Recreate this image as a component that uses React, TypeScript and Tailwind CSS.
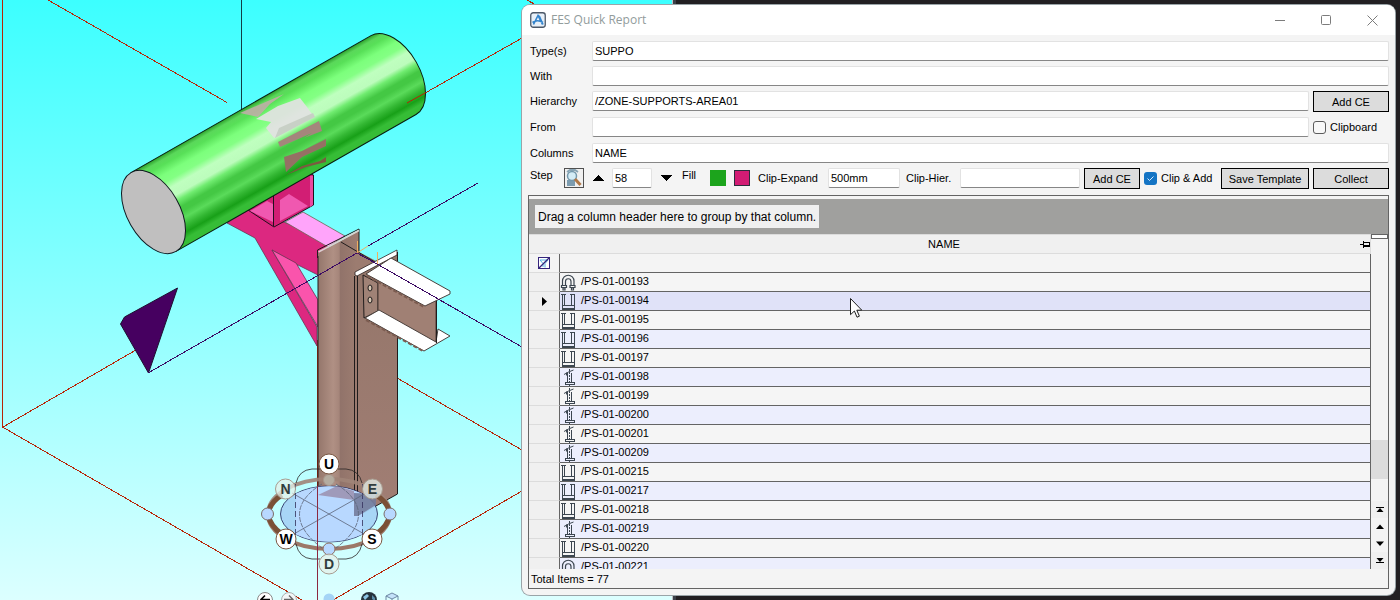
import React from "react";

type Kind = "bolt" | "clamp" | "stand";

const rows: { name: string; kind: Kind }[] = [
  { name: "/PS-01-00193", kind: "bolt" },
  { name: "/PS-01-00194", kind: "clamp" },
  { name: "/PS-01-00195", kind: "clamp" },
  { name: "/PS-01-00196", kind: "clamp" },
  { name: "/PS-01-00197", kind: "clamp" },
  { name: "/PS-01-00198", kind: "stand" },
  { name: "/PS-01-00199", kind: "stand" },
  { name: "/PS-01-00200", kind: "stand" },
  { name: "/PS-01-00201", kind: "stand" },
  { name: "/PS-01-00209", kind: "stand" },
  { name: "/PS-01-00215", kind: "clamp" },
  { name: "/PS-01-00217", kind: "clamp" },
  { name: "/PS-01-00218", kind: "clamp" },
  { name: "/PS-01-00219", kind: "stand" },
  { name: "/PS-01-00220", kind: "clamp" },
  { name: "/PS-01-00221", kind: "bolt" },
];

function KindIcon({ kind }: { kind: Kind }) {
  return (
    <svg width="16" height="17" viewBox="0 0 16 17" fill="none" stroke="#3c4650" shapeRendering="crispEdges" className="block">
      {kind === "clamp" && (
        <path d="M1 1.500h5M10 1.500h5M2.500 2v14h12V2M4.500 2v10.500h7V2M3 12.500h11M3 15.500h12" />
      )}
      {kind === "bolt" && (
        <g shapeRendering="auto" strokeWidth="1.200">
          <path d="M2.500 12V7a5.500 5.500 0 0 1 11.500 0v5M5.500 12V7.500a2.500 2.500 0 0 1 5.500 0V12" />
          <path d="M1.500 11.500h5v2h-5zM10 11.500h5v2h-5zM3 14h2v2H3zM11.500 14h2v2h-2z" />
        </g>
      )}
      {kind === "stand" && (
        <>
          <path d="M7.500 3.500v10M11.500 3.500v10M5 13.500h9v2H5z" />
          <path d="M9.500 0v13" strokeDasharray="2 1" />
          <path d="M4 5.500l4.500-2.500 5-2M6.500 3.500v3M9.500 16v1" shapeRendering="auto" />
        </>
      )}
    </svg>
  );
}

function CompassNode({ x, y, t, faded }: { x: number; y: number; t: string; faded?: boolean }) {
  return (
    <g>
      <circle cx={x} cy={y} r="10" fill={faded ? "#e4f0ea" : "#ffffff"} fillOpacity={faded ? 0.75 : 1} stroke={faded ? "#a89c90" : "#7a5844"} />
      <text x={x} y={y + 5} textAnchor="middle" fontFamily="'Liberation Sans', Arial, sans-serif" fontWeight="700" fontSize="14" fill={faded ? "#303c3c" : "#000"}>
        {t}
      </text>
    </g>
  );
}

function Scene() {
  return (
    <svg width="672" height="600" viewBox="0 0 672 600" fill="none" className="block shrink-0" role="img" aria-label="3D view of pipe support">
      <defs>
        <linearGradient id="sky" x1="0" y1="0" x2="0" y2="1">
          <stop offset="0" stopColor="#3cffff" />
          <stop offset="0.5" stopColor="#8cffff" />
          <stop offset="1" stopColor="#dcffff" />
        </linearGradient>
        <linearGradient id="pipe" x1="0" y1="-45.400" x2="0" y2="45.400" gradientUnits="userSpaceOnUse">
          <stop offset="0" stopColor="#2ca02c" />
          <stop offset="0.05" stopColor="#5ad85a" />
          <stop offset="0.1" stopColor="#58e058" />
          <stop offset="0.2" stopColor="#7cff7c" />
          <stop offset="0.28" stopColor="#84ff84" />
          <stop offset="0.36" stopColor="#bfffbf" />
          <stop offset="0.46" stopColor="#bcfcbc" />
          <stop offset="0.52" stopColor="#70ec70" />
          <stop offset="0.6" stopColor="#44c844" />
          <stop offset="0.65" stopColor="#44c844" />
          <stop offset="0.72" stopColor="#5adb5a" />
          <stop offset="0.8" stopColor="#34b834" />
          <stop offset="0.87" stopColor="#18a018" />
          <stop offset="0.93" stopColor="#36bd36" />
          <stop offset="1" stopColor="#36bd36" />
        </linearGradient>
        <linearGradient id="col" x1="318" y1="0" x2="356" y2="0" gradientUnits="userSpaceOnUse">
          <stop offset="0" stopColor="#94766b" />
          <stop offset="0.4" stopColor="#b09084" />
          <stop offset="0.56" stopColor="#a5857a" />
          <stop offset="0.58" stopColor="#91736a" />
          <stop offset="1" stopColor="#9c7c70" />
        </linearGradient>
        <linearGradient id="colr" x1="0" y1="260" x2="0" y2="516" gradientUnits="userSpaceOnUse">
          <stop offset="0" stopColor="#94766a" />
          <stop offset="1" stopColor="#a17e74" />
        </linearGradient>
      </defs>
      <rect width="672" height="600" fill="url(#sky)" />

      <g stroke="#b82406" shapeRendering="crispEdges">
        <path d="M2.500 0V427L302 600M3 427L148 343" />
        <path d="M48 0L227 102.500M397 378L522 450M522 491L333 600M317.500 340V600M527 0l9 5" />
        <path d="M241.500 0V111" stroke="#123c46" />
      </g>

      <path d="M120.500 324l4-7 53-29-29 85z" fill="#460060" stroke="#1c1030" />

      <path d="M227 223L250 209 330 240 318 275 296 264 272 250 317 327V346L255 238z" fill="#dc2880" stroke="#6c3450" strokeWidth="0.800" />
      <path d="M272 250L296 263 318 300V327z" fill="#fa54ac" stroke="#6c3450" strokeWidth="0.800" />
      <path d="M303 212L345 236 328 247 285 222z" fill="#ffa4fa" stroke="#6c6450" strokeWidth="0.800" />
      <path d="M245 208L300 170 313.500 175V205L274 227z" fill="#d21e74" stroke="#20101c" />
      <path d="M250 211L267 201 273 204V222z" fill="#f058b0" />
      <path d="M280 200L289 194 308 206 280 221z" fill="#f058b0" />
      <path d="M310 176h3v29l-3 2z" fill="#ec48a0" />
      <path d="M273.500 196V226" stroke="#20101c" />

      <g transform="translate(153.500 212) rotate(-29.700)">
        <path d="M0-45.400H276.300a26.200 45.400 0 0 1 0 90.800H0z" fill="url(#pipe)" stroke="#081c10" />
        <ellipse rx="26.200" ry="45.400" fill="#c0bfbf" stroke="#101820" />
      </g>
      <path d="M240 113L284 94 270 104 258 117z" fill="#bfaea6" opacity="0.900" />
      <path d="M256 119L278 106 300 98 307 107 314 117 274 138 266 128 271 122z" fill="#e2e2e2" opacity="0.920" />
      <path d="M279 128L313 113 315 117 275 138z" fill="#c8d0c6" />
      <path d="M278 142L319 121 322 131 304 138 312 133 280 147z" fill="#a4867c" />
      <path d="M284 157L302 151 326 139V146L302 157 286 172z" fill="#957064" />
      <path d="M286 175L302 166 320 161 326 157V162L306 167z" fill="#7c5a40" />
      <path d="M407 103L426 92.500" stroke="#b82406" />
      <path d="M426 92.500L522 38" stroke="#b82406" shapeRendering="crispEdges" />

      <path d="M359 231V252L397 272V494L358 516 337 485 341 242z" fill="url(#colr)" />
      <path d="M318 253L359 231V254L375 264 356 275V491L337 485 318 495z" fill="url(#col)" />
      <path d="M317.500 258V250L359 229V251M341 242L375 262M318 256V495" stroke="#201c1c" />
      <path d="M318.500 252L359 230.500" stroke="#d8d4d0" strokeWidth="1.500" />
      <path d="M355 276L397 254V494L358 516H355z" fill="url(#colr)" />
      <path d="M354.500 276V516M357.500 276V516M397.500 252V494L358 516" stroke="#201c1c" />
      <path d="M355 275V272L397 250V255L357 276z" fill="#fff" stroke="#2a201e" strokeWidth="0.800" />
      <path d="M363 275L378 283V311L364 318z" fill="#a08276" stroke="#201c1c" />
      <path d="M378 280L436 300V343L378 311z" fill="#a08074" stroke="#4a3a34" />
      <path d="M366 274L391 258 450 291V294L425 306z" fill="#fff" stroke="#4a403c" />
      <path d="M367 276L424 307" stroke="#7c5c50" strokeWidth="2" strokeDasharray="4 2" />
      <path d="M365 318L379 310 436 342 438 329 450 336 424 351z" fill="#fff" stroke="#4a403c" />
      <path d="M366 320L423 351" stroke="#7c5c50" strokeWidth="2" strokeDasharray="4 2" />
      <path d="M436.500 301V343" stroke="#201c1c" />
      <ellipse cx="370" cy="288" rx="2" ry="3" fill="#d8c8b4" stroke="#201c1c" />
      <ellipse cx="370" cy="300" rx="2" ry="3" fill="#d8c8b4" stroke="#201c1c" />
      <path d="M148 373L357 253M368 246L478 183M357 253L377 264 522 347" stroke="#3c0a64" shapeRendering="crispEdges" />
      <path d="M357.500 241V252M357 253L368 246M377.500 252V264" stroke="#f0b060" />

      <ellipse cx="329" cy="514" rx="48.500" ry="28" fill="#a6d4f6" fillOpacity="0.950" stroke="#1c1c50" strokeWidth="0.800" />
      <path d="M296 493.500Q329 479 362 493.500V534.500Q329 549 296 534.500z" fill="#b8d8ff" />
      <path d="M318 495L337 486 354 491V500L318 495z" fill="#94809c" opacity="0.700" />
      <path d="M354 493L376 494V505L358 516H354z" fill="#747c9c" opacity="0.900" />
      <path d="M268 514A61 35 0 0 1 390 514" stroke="#a08478" strokeWidth="4" opacity="0.900" />
      <path d="M268 514A61 35 0 0 0 390 514" stroke="#9c7868" strokeWidth="4" />
      <path d="M268 514q2-12 14-19M268 514q2 12 14 20M390 514q-2-12-14-19M390 514q-2 12-14 20" stroke="#7a5036" strokeWidth="5" />
      <path d="M320 469h-8q-13 1-16 14M338 469h8q13 1 16 14M296 544q3 14 16 15h8M362 544q-3 14-16 15h-8" stroke="#2a2424" strokeWidth="0.800" />
      <path d="M295.500 484v60M362.500 484v60" stroke="#34305c" strokeWidth="0.800" strokeDasharray="6 3" />
      <g stroke="#5c6478" strokeWidth="0.800">
        <path d="M292 493L366 535M366 493L292 535" />
        <path d="M322 484C292 502 292 526 322 548M336 484C366 502 366 526 336 548" strokeDasharray="5 1" />
      </g>
      <path d="M317.500 486V600" stroke="#8c2840" shapeRendering="crispEdges" />
      <circle cx="267.500" cy="514" r="6" fill="#b8d8ff" stroke="#7c6c68" />
      <circle cx="390" cy="514" r="6" fill="#b8d8ff" stroke="#7c6c68" />
      <circle cx="329" cy="480" r="5.500" fill="#b4aca0" stroke="#a8968c" />
      <circle cx="329" cy="549" r="6" fill="#b8d8ff" stroke="#8c6c60" />
      <CompassNode x={329} y={464} t="U" />
      <CompassNode x={285.5} y={489} t="N" faded />
      <CompassNode x={372.5} y={489} t="E" faded />
      <CompassNode x={286} y={539} t="W" />
      <CompassNode x={372} y={539} t="S" />
      <CompassNode x={329} y={564} t="D" faded />

      <circle cx="265" cy="600" r="7.500" fill="#fff" stroke="#888" />
      <path d="M270 599.500h-9M265 595.500l-4 4 4 4" stroke="#000" strokeWidth="1.600" />
      <circle cx="289" cy="600" r="7.500" fill="#f2f6f6" stroke="#a8b0b0" />
      <path d="M284 599.500h9M289 595.500l4 4-4 4" stroke="#666" strokeWidth="1.400" />
      <circle cx="329" cy="599" r="5.500" fill="#a4d4f6" />
      <circle cx="369" cy="600" r="8" fill="#26323c" />
      <path d="M363 597l4-3 2 2-4 4z" fill="#8cc4e4" />
      <path d="M372 595l3 3v3l-3-2z" fill="#5c8ca8" />
      <path d="M386 596l6-3 6 3-6 3z" fill="#c4e2fa" stroke="#6c88a4" />
      <path d="M386 596v6M398 596v6M392 599v4" stroke="#6c88a4" />
    </svg>
  );
}

const field =
  "h-[20px] min-w-0 rounded-[2px] border border-t-[#e2e2e2] border-x-[#e2e2e2] border-b-[#868686] bg-white px-[2px] text-[11px] leading-[16px] text-black outline-none";
const button =
  "h-[21px] shrink-0 border border-black bg-[#dcdcdc] text-center text-[11px] leading-[18px] text-black whitespace-nowrap";

function Field({ id, label, value = "", children }: { id: string; label: string; value?: string; children?: React.ReactNode }) {
  return (
    <div className="flex items-start">
      <label htmlFor={id} className="w-[62px] shrink-0 leading-[20px]">
        {label}
      </label>
      <input id={id} defaultValue={value} className={`${field} flex-1`} />
      {children}
    </div>
  );
}

function Arrow({ down, label }: { down?: boolean; label: string }) {
  return (
    <button type="button" aria-label={label} className="flex h-[20px] w-[12px] shrink-0 items-center justify-center">
      <svg width="12" height="6" viewBox="0 0 12 6" shapeRendering="crispEdges">
        <path d={down ? "M0 0h12L6 6z" : "M0 6h12L6 0z"} fill="#000" />
      </svg>
    </button>
  );
}

const scrollPaths = [
  { label: "First row", d: "M0 0h8v1H0zM4 1l3.500 4h-7z" },
  { label: "Previous row", d: "M4 0.500l4 4.500H0z" },
  { label: "Next row", d: "M4 5l4-4.500H0z" },
  { label: "Last row", d: "M0 4h8v1H0zM4 4L7.500 0h-7z" },
];

export default function App() {
  return (
    <main className="relative h-screen overflow-hidden bg-[#221f22] font-['Liberation_Sans',Arial,sans-serif] text-[11px] text-black">
      <div className="absolute inset-0 flex">
        <Scene />
        <div className="w-px bg-[#c0c0c4]" />
        <div className="w-[3px] bg-[#3c4048]" />
      </div>

      <div className="relative flex h-full pt-[5px] pr-[5px] pb-[5px] pl-[522px]">
        <section className="flex min-w-0 flex-1 flex-col overflow-hidden rounded-[8px] bg-[#f4f4f4] shadow-[0_0_0_1px_#9aa4a8]">
          <header className="flex h-[30px] shrink-0 items-center bg-white pr-[17px] pl-[8px]">
            <svg width="16" height="16" viewBox="0 0 16 16" className="mr-[5px] shrink-0">
              <rect x="0.750" y="0.750" width="14.500" height="14.500" rx="2.500" fill="#e8f0f8" stroke="#4c5868" strokeWidth="1.300" />
              <path d="M3.500 12.500L8 3.500l4.500 9M8 3.500l1.500 1 3.500 8M2.500 10.500q5-3.500 10.500 0" fill="none" stroke="#3484cc" strokeWidth="1.600" />
            </svg>
            <h1 className="flex-1 font-['Open_Sans','Noto_Sans',sans-serif] text-[12px] text-[#929c9c]">FES Quick Report</h1>
            <div className="flex items-center gap-[35px] text-[#7c7c7c]">
              <button type="button" aria-label="Minimize">
                <svg width="11" height="11" viewBox="0 0 11 11" className="block"><path d="M0 5.500h10" stroke="currentColor" /></svg>
              </button>
              <button type="button" aria-label="Maximize">
                <svg width="11" height="11" viewBox="0 0 11 11" fill="none" className="block"><rect x="0.500" y="0.500" width="9" height="9" rx="1" stroke="currentColor" /></svg>
              </button>
              <button type="button" aria-label="Close">
                <svg width="11" height="11" viewBox="0 0 11 11" className="block"><path d="M0.500 0.500l10 10M10.500 0.500l-10 10" stroke="currentColor" /></svg>
              </button>
            </div>
          </header>

          <form className="flex shrink-0 flex-col gap-[5px] pt-[6px] pr-[6px] pl-[8px]">
            <Field id="types" label="Type(s)" value="SUPPO" />
            <Field id="with" label="With" />
            <Field id="hierarchy" label="Hierarchy" value="/ZONE-SUPPORTS-AREA01">
              <button type="button" className={`${button} ml-[4px] w-[76px]`}>Add CE</button>
            </Field>
            <div className="flex items-start">
              <div className="flex-1">
                <Field id="from" label="From" />
              </div>
              <label className="ml-[4px] flex h-[21px] w-[76px] items-center gap-[4px]">
                <input type="checkbox" className="h-[13px] w-[13px] appearance-none rounded-[3px] border border-[#5c5c5c] bg-[#f8f8f8]" />
                Clipboard
              </label>
            </div>
            <Field id="columns" label="Columns" value="NAME" />

            <div className="flex h-[22px] items-start">
              <label htmlFor="step" className="w-[34px] shrink-0 leading-[14px]">Step</label>
              <button type="button" aria-label="Zoom to element" className="h-[20px] w-[20px] shrink-0 border border-[#505050] bg-[#f0f0f0]">
                <svg width="18" height="18" viewBox="0 0 18 18" fill="none">
                  <path d="M2 11h8v6H2z" fill="#7c9cb0" />
                  <path d="M2 3l3-2h5l3 2" stroke="#88a4b4" strokeWidth="2" />
                  <circle cx="7" cy="7" r="4.500" fill="#d4ecf6" stroke="#7498ac" strokeWidth="1.500" />
                  <path d="M10 10l5.500 6" stroke="#b07848" strokeWidth="3" />
                </svg>
              </button>
              <div className="mx-[8px] flex"><Arrow label="Step up" /></div>
              <input id="step" defaultValue="58" className={`${field} w-[40px]`} />
              <div className="mr-[10px] ml-[8px] flex"><Arrow down label="Step down" /></div>
              <span className="w-[28px] shrink-0 leading-[14px]">Fill</span>
              <button type="button" aria-label="Fill green" className="mt-[2px] h-[16px] w-[16px] shrink-0 bg-[#1ca41c]" />
              <button type="button" aria-label="Fill magenta" className="mt-[2px] ml-[8px] h-[16px] w-[16px] shrink-0 border border-[#2c2c3c] bg-[#d21c74]" />
              <label htmlFor="expand" className="ml-[8px] w-[70px] shrink-0 leading-[20px]">Clip-Expand</label>
              <input id="expand" defaultValue="500mm" className={`${field} w-[72px]`} />
              <label htmlFor="cliphier" className="ml-[6px] w-[54px] shrink-0 leading-[20px]">Clip-Hier.</label>
              <input id="cliphier" className={`${field} flex-1`} />
              <button type="button" className={`${button} ml-[4px] w-[56px]`}>Add CE</button>
              <label className="ml-[4px] flex h-[21px] w-[77px] shrink-0 items-center gap-[4px] whitespace-nowrap">
                <span className="relative flex">
                  <input type="checkbox" defaultChecked className="h-[13px] w-[13px] appearance-none rounded-[3px] bg-[#1474c4]" />
                  <svg width="13" height="13" viewBox="0 0 13 13" fill="none" className="pointer-events-none absolute inset-0">
                    <path d="M3.500 6.500l2 2 4-4" stroke="#d4ecff" />
                  </svg>
                </span>
                Clip &amp; Add
              </label>
              <button type="button" className={`${button} w-[88px]`}>Save Template</button>
              <button type="button" className={`${button} ml-[4px] w-[76px]`}>Collect</button>
            </div>
          </form>

          <div className="mx-[6px] mt-[5px] mb-[6px] flex min-h-0 flex-1 flex-col border border-[#646464]">
            <div className="mt-[3px] flex h-[35px] shrink-0 items-center bg-[#a0a09e] pl-[6px]">
              <p className="flex h-[23px] items-center bg-[#f0f0f0] px-[3px] text-[12px]">Drag a column header here to group by that column.</p>
            </div>
            <div className="flex min-h-0 flex-1">
              <div className="min-h-0 min-w-0 flex-1 overflow-hidden">
                <table className="w-full table-fixed border-separate border-spacing-0">
                  <colgroup>
                    <col className="w-[31px]" />
                    <col />
                  </colgroup>
                  <thead>
                    <tr>
                      <th colSpan={2} className="h-[20px] border-y border-r border-[#dcdcdc] bg-[#f0f0f0] p-0 font-normal">
                        <div className="flex h-[18px] items-center">
                          <span className="flex-1 text-center">NAME</span>
                          <svg width="11" height="9" viewBox="0 0 11 9" fill="none" stroke="#000" shapeRendering="crispEdges">
                            <path d="M1 4.500h3M4.500 1v7M5 2.500h5v4H5M5 5.500h5" />
                          </svg>
                        </div>
                      </th>
                    </tr>
                  </thead>
                  <tbody>
                    <tr>
                      <td className="h-[19px] border-r border-b border-r-[#646464] border-b-[#dcdcdc] p-0">
                        <svg width="12" height="12" viewBox="0 0 12 12" fill="none" className="mx-auto">
                          <rect x="0.500" y="0.500" width="11" height="11" fill="#fff" stroke="#34247c" />
                          <path d="M2 3h8L7 6.500v4M5 10V6.500L2 3" stroke="#50b0e0" />
                          <path d="M1 11L11 1" stroke="#34247c" strokeWidth="1.300" />
                        </svg>
                      </td>
                      <td className="border-r border-b border-[#646464] p-0" />
                    </tr>
                    {rows.map((r, i) => (
                      <tr key={r.name} className={i === 1 ? "bg-[#e0e2f8]" : i % 2 ? "bg-[#eceefd]" : "bg-[#f5f5f5]"}>
                        <td className="h-[19px] border-r border-b border-r-[#646464] border-b-[#dcdcdc] bg-[#f0f0f0] p-0">
                          {i === 1 && (
                            <svg width="5" height="9" viewBox="0 0 5 9" className="mx-auto"><path d="M0 0l5 4.500L0 9z" fill="#000" /></svg>
                          )}
                        </td>
                        <td className="border-r border-b border-[#646464] p-0">
                          <div className="flex h-[18px] items-center gap-[5px]">
                            <KindIcon kind={r.kind} />
                            <span className="pb-[2px] text-[11px] leading-[14px]">{r.name}</span>
                          </div>
                        </td>
                      </tr>
                    ))}
                  </tbody>
                </table>
              </div>
              <div className="flex w-[17px] shrink-0 flex-col">
                <div className="h-[5px] border border-[#646464] bg-white" />
                <div className="flex-[201]" />
                <div className="h-[39px] bg-[#dcdcdc]" />
                <div className="flex-[22]" />
                {scrollPaths.map((s, i) => (
                  <button key={s.label} type="button" aria-label={s.label} className={`flex h-[17px] items-center justify-center ${i % 3 ? "" : "bg-[#f0f0f0]"}`}>
                    <svg width="8" height="5" viewBox="0 0 8 5"><path d={s.d} fill="#000" /></svg>
                  </button>
                ))}
              </div>
            </div>
            <footer className="h-[19px] shrink-0 pl-[2px] leading-[20px]">Total Items = 77</footer>
          </div>
        </section>
      </div>

      <svg width="12" height="21" viewBox="0 0 12 21" className="absolute top-[298px] left-[850px]">
        <path d="M0.500 0.500v16.200l3.900-3.700 2.600 6.200 2.400-1-2.600-6h5z" fill="#fff" stroke="#202020" />
      </svg>
    </main>
  );
}
